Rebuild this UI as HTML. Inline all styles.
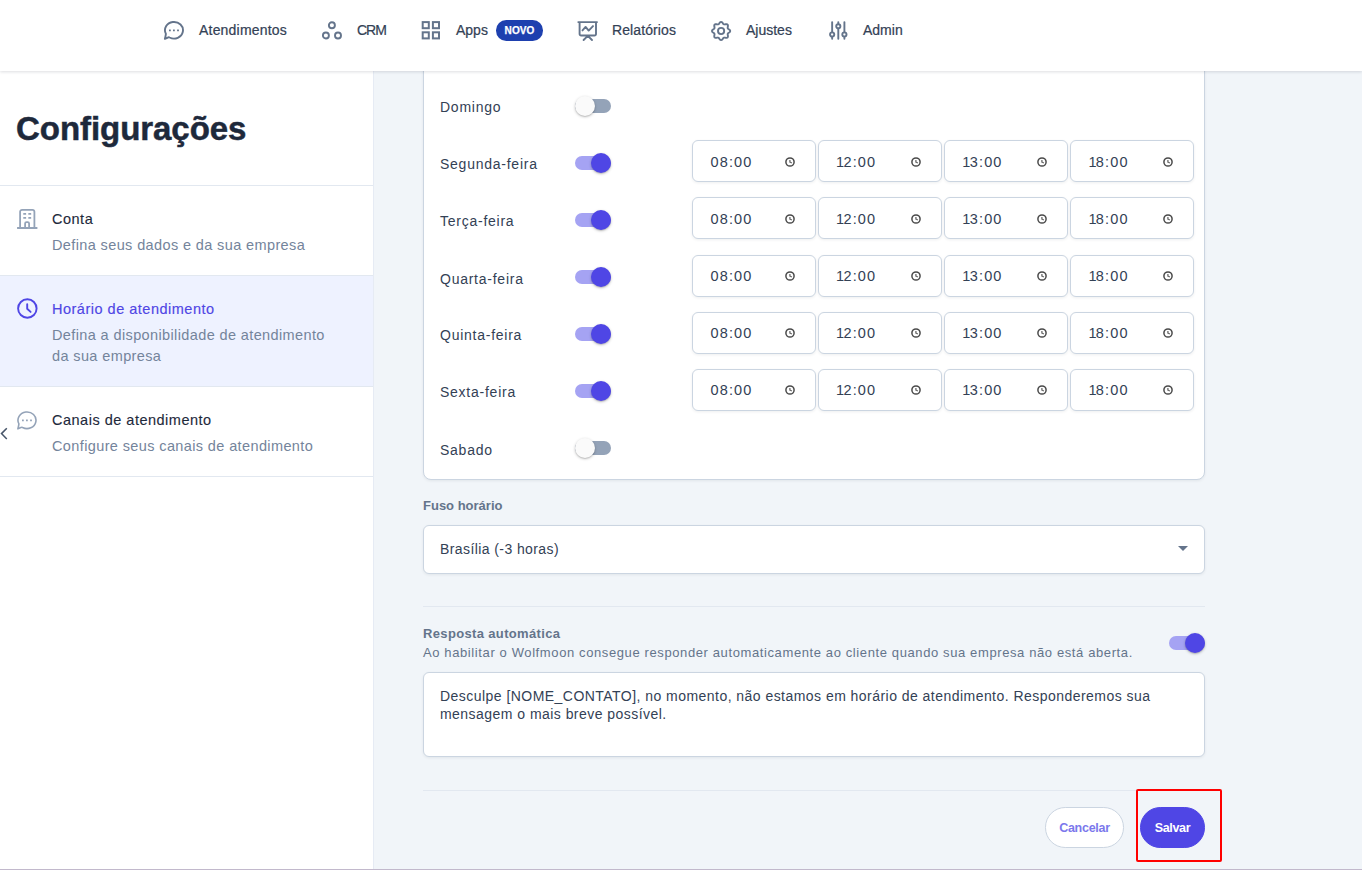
<!DOCTYPE html>
<html lang="pt-BR">
<head>
<meta charset="utf-8">
<title>Configurações - Horário de atendimento</title>
<style>
*{box-sizing:border-box;margin:0;padding:0}
html,body{width:1362px;height:870px;overflow:hidden}
body{font-family:"Liberation Sans",sans-serif;background:#f1f5f9;color:#1e293b;position:relative}
svg{display:block}
/* header */
.topbar{position:absolute;left:0;top:0;width:1362px;height:71px;background:#fff;box-shadow:0 1px 3px rgba(15,23,42,.14);z-index:5}
.nav{position:absolute;left:0;top:0;height:60px;list-style:none}
.nav li{position:absolute;top:0;height:60px;white-space:nowrap;font-size:14px;color:#334155;-webkit-text-stroke:.22px #334155}
.ic{position:absolute;left:0;display:block}
.nav li span.t{position:absolute;top:21.5px;line-height:16px}
.badge{position:absolute;top:20px;height:20.5px;border-radius:10.25px;background:#1e40af;color:#fff;font-size:10px;font-weight:700;line-height:21px;text-align:center;-webkit-text-stroke:.25px #fff;letter-spacing:.1px}
/* sidebar */
.side{position:absolute;left:0;top:71px;width:374px;height:799px;background:#fff;border-right:1px solid #e6ebf4}
.side h1{position:absolute;left:16px;top:38px;font-size:33px;line-height:40px;font-weight:700;color:#1e293b;letter-spacing:-.05px;-webkit-text-stroke:.5px #1e293b}
.menu{position:absolute;left:0;top:114px;width:373px;list-style:none;border-top:1px solid #e2e8f0}
.menu li{position:relative;border-bottom:1px solid #e2e8f0;padding:24px 20px 0 52px;white-space:nowrap}
.menu li.act{background:#eef2ff}

.menu li b{display:block;font-size:14.5px;line-height:18px;font-weight:400;color:#1e293b;letter-spacing:.5px;-webkit-text-stroke:.12px #1e293b}
.menu li.act b{color:#4f46e5;-webkit-text-stroke:.15px #4f46e5;letter-spacing:.5px}
.menu li p{font-size:14.5px;line-height:21.3px;color:#74849b;margin-top:6.5px;letter-spacing:.38px}
.chev{position:absolute;left:0;top:355.500px}
/* main */
.main{position:absolute;left:373px;top:71px;width:989px;height:799px}
.card{position:absolute;left:50px;top:-20px;width:782px;height:429px;background:#fff;border:1px solid #cbd5e1;border-radius:8px;box-shadow:0 1px 3px rgba(15,23,42,.07)}
.row{position:absolute;left:0;width:780px;height:42px}
.row label{position:absolute;left:16px;top:15.85px;font-size:14px;line-height:16px;color:#334155;white-space:nowrap;letter-spacing:.75px}
.tg{position:absolute;width:36px;height:20px}
.tg i{position:absolute;left:0;top:3px;width:36px;height:14px;border-radius:7px;background:#94a3b8}
.tg u{position:absolute;left:0;top:0;width:20px;height:20px;border-radius:50%;background:#fafafa;box-shadow:0 1px 3px rgba(0,0,0,.24),0 1px 1px rgba(0,0,0,.1)}
.tg.on i{background:#a5a3f3}
.tg.on u{left:16px;background:#4f46e5}
.row .tg{left:151px;top:12.8px}
.tm{position:absolute;top:0;width:124px;height:42px;border:1px solid #cbd5e1;border-radius:6px;background:#fff;box-shadow:0 1px 3px rgba(15,23,42,.07)}
.tm span i{font-style:normal;margin-left:-.5px;letter-spacing:-.6px}
.tm span{position:absolute;left:17.5px;top:12.8px;font-size:14.5px;line-height:16px;color:#334155;letter-spacing:1.15px}
.tm svg{position:absolute;left:91px;top:14.800px}
.row.up label,.row.up .tg,.row.up .tm span,.row.up .tm svg{margin-top:-.9px}
.lbl{position:absolute;left:50px;font-size:13px;line-height:14px;font-weight:700;color:#64748b;white-space:nowrap}
.sel{position:absolute;left:50px;top:454.4px;width:782px;height:48.2px;background:#fff;border:1px solid #cbd5e1;border-radius:6px;box-shadow:0 1px 3px rgba(15,23,42,.07)}
.sel span{position:absolute;left:16px;top:14.9px;font-size:14px;line-height:16px;color:#334155;letter-spacing:.41px;white-space:nowrap}
.sel em{position:absolute;right:16px;top:19.500px;width:0;height:0;border-left:5px solid transparent;border-right:5px solid transparent;border-top:5px solid #64748b}
.hr{position:absolute;left:50px;width:782px;height:1px;background:#e2e8f0}
.desc{position:absolute;left:50px;top:575px;font-size:13px;line-height:14px;color:#64748b;letter-spacing:.61px;white-space:nowrap}
.ta{position:absolute;left:50px;top:600.5px;width:782px;height:85px;background:#fff;border:1px solid #cbd5e1;border-radius:6px;box-shadow:0 1px 3px rgba(15,23,42,.07);padding:14.3px 16px;font-size:14px;line-height:18.5px;color:#334155;letter-spacing:.46px;white-space:nowrap}
.btn{position:absolute;top:736px;height:40.5px;border-radius:20.25px;font-size:12.5px;font-weight:700;line-height:40px;text-align:center}
.btn.c{left:672px;width:79px;background:#fff;border:1px solid #cbd5e1;color:#7b78ec;letter-spacing:-.26px}
.btn.s{left:767px;width:65px;background:#4f46e5;border:1px solid #4f46e5;color:#fff;letter-spacing:-.35px}
.hl{position:absolute;left:763px;top:717.7px;width:86.2px;height:73.3px;border:2.6px solid #ff0000;border-radius:2px}
.bl{position:absolute;left:0;top:868.5px;width:1362px;height:1.5px;background:linear-gradient(#d9d2e0,#ab9fb8);z-index:9}
</style>
</head>
<body>
<header class="topbar">
<ul class="nav">
<li style="left:163px"><span class="ic" style="top:19px"><svg width="22" height="22" viewBox="0 0 22 22" fill="none" stroke="#64748b" stroke-width="1.900" stroke-linejoin="round"><path d="M2.9 14.9A9 8.3 0 1 1 6.6 18.5Q5.6 17.9 4.9 18.6L1.900 19.800Q2.600 17.500 2.900 14.900z"/><g fill="#64748b" stroke="none"><rect x="6" y="10.400" width="1.800" height="1.800" rx=".3"/><rect x="10" y="10.400" width="1.800" height="1.800" rx=".3"/><rect x="14.100" y="10.400" width="1.800" height="1.800" rx=".3"/></g></svg></span><span class="t" style="left:36px;letter-spacing:.2px">Atendimentos</span></li>
<li style="left:321px"><span class="ic" style="top:20px"><svg width="22" height="20" viewBox="0 0 22 20" fill="none" stroke="#64748b" stroke-width="1.900"><circle cx="10.900" cy="5.200" r="3"/><circle cx="4.900" cy="15.500" r="3"/><circle cx="17" cy="15.500" r="3"/></svg></span><span class="t" style="left:36px;letter-spacing:-1px">CRM</span></li>
<li style="left:421px"><span class="ic" style="top:20px"><svg width="20" height="20" viewBox="0 0 20 20" fill="none" stroke="#64748b" stroke-width="2"><rect x="1.700" y="2.100" width="6.100" height="6.100"/><rect x="11.900" y="2.100" width="6.100" height="6.100"/><rect x="1.700" y="12.300" width="6.100" height="6.100"/><rect x="11.900" y="12.300" width="6.100" height="6.100"/></svg></span><span class="t" style="left:35px">Apps</span><span class="badge" style="left:75px;width:47px">NOVO</span></li>
<li style="left:577px"><span class="ic" style="top:20px"><svg width="22" height="22" viewBox="0 0 22 22" fill="none" stroke="#64748b" stroke-width="1.900" stroke-linecap="round" stroke-linejoin="round"><path d="M1.300 2.100H20M2.600 2.100V14a1.500 1.500 0 0 0 1.500 1.500H17.500a1.500 1.500 0 0 0 1.500-1.500V2.100M10.800 15.800L6.600 20M10.800 15.800L15 20M5.500 10.400L8.600 6.900l3.100 3.700L16 6.100"/></svg></span><span class="t" style="left:35px;letter-spacing:.1px">Relatórios</span></li>
<li style="left:710px"><span class="ic" style="top:19.800px"><svg width="22" height="22" viewBox="0 0 22 22" fill="none" stroke="#64748b" stroke-width="1.900" stroke-linejoin="round"><circle cx="11.100" cy="11" r="3.100"/><path transform="translate(.1 0)" d="M20.10 11.00 L19.95 11.59 L19.55 12.13 L18.99 12.59 L18.41 12.99 L17.94 13.36 L17.65 13.76 L17.57 14.24 L17.65 14.84 L17.78 15.53 L17.84 16.25 L17.75 16.92 L17.43 17.43 L16.92 17.75 L16.25 17.84 L15.53 17.78 L14.84 17.65 L14.24 17.57 L13.76 17.65 L13.36 17.94 L12.99 18.41 L12.59 18.99 L12.13 19.55 L11.59 19.95 L11.00 20.10 L10.41 19.95 L9.87 19.55 L9.41 18.99 L9.01 18.41 L8.64 17.94 L8.24 17.65 L7.76 17.57 L7.16 17.65 L6.47 17.78 L5.75 17.84 L5.08 17.75 L4.57 17.43 L4.25 16.92 L4.16 16.25 L4.22 15.53 L4.35 14.84 L4.43 14.24 L4.35 13.76 L4.06 13.36 L3.59 12.99 L3.01 12.59 L2.45 12.13 L2.05 11.59 L1.90 11.00 L2.05 10.41 L2.45 9.87 L3.01 9.41 L3.59 9.01 L4.06 8.64 L4.35 8.24 L4.43 7.76 L4.35 7.16 L4.22 6.47 L4.16 5.75 L4.25 5.08 L4.57 4.57 L5.08 4.25 L5.75 4.16 L6.47 4.22 L7.16 4.35 L7.76 4.43 L8.24 4.35 L8.64 4.06 L9.01 3.59 L9.41 3.01 L9.87 2.45 L10.41 2.05 L11.00 1.90 L11.59 2.05 L12.13 2.45 L12.59 3.01 L12.99 3.59 L13.36 4.06 L13.76 4.35 L14.24 4.43 L14.84 4.35 L15.53 4.22 L16.25 4.16 L16.92 4.25 L17.43 4.57 L17.75 5.08 L17.84 5.75 L17.78 6.47 L17.65 7.16 L17.57 7.76 L17.65 8.24 L17.94 8.64 L18.41 9.01 L18.99 9.41 L19.55 9.87 L19.95 10.41z"/></svg></span><span class="t" style="left:36px">Ajustes</span></li>
<li style="left:829px"><span class="ic" style="top:20px"><svg width="20" height="20" viewBox="0 0 20 20" fill="none" stroke="#64748b" stroke-width="1.900" stroke-linecap="round"><path d="M3.150 2.100V12.300M3.150 16.700V18.700M9.300 2.100V4.100M9.300 8.500V18.700M15.400 2.100V12.300M15.400 16.700V18.700"/><circle cx="3.150" cy="14.500" r="2.100"/><circle cx="9.300" cy="6.300" r="2.100"/><circle cx="15.400" cy="14.500" r="2.100"/></svg></span><span class="t" style="left:34px">Admin</span></li>
</ul>
</header>

<aside class="side">
<h1>Configurações</h1>
<ul class="menu">
<li style="height:90px"><span class="ic" style="left:16px;top:22px"><svg width="24" height="22" viewBox="0 0 24 22" fill="none" stroke="#94a3b8" stroke-width="1.800"><path d="M1.100 20H21.400M4.100 20V3.800a2 2 0 0 1 2-2H16.400a2 2 0 0 1 2 2V20M9.100 20V15.600a1.500 1.500 0 0 1 1.500-1.500h1a1.500 1.500 0 0 1 1.500 1.500V20"/><g fill="#94a3b8" stroke="none"><rect x="7.250" y="4.950" width="2.900" height="1.900" rx=".3"/><rect x="12.300" y="4.950" width="2.900" height="1.900" rx=".3"/><rect x="7.250" y="8.950" width="2.900" height="1.900" rx=".3"/><rect x="12.300" y="8.950" width="2.900" height="1.900" rx=".3"/></g></svg></span><b>Conta</b><p>Defina seus dados e da sua empresa</p></li>
<li class="act" style="height:111px"><span class="ic" style="left:16px;top:21px"><svg width="24" height="24" viewBox="0 0 24 24" fill="none" stroke="#4f46e5" stroke-width="1.900" stroke-linecap="round" stroke-linejoin="round"><circle cx="11.350" cy="11.500" r="9.250"/><path d="M11.200 7.300V11.800L14.600 14.900"/></svg></span><b>Horário de atendimento</b><p>Defina a disponibilidade de atendimento<br>da sua empresa</p></li>
<li style="height:90px"><span class="ic" style="left:16.100px;top:21.500px"><svg width="22" height="22" viewBox="0 0 22 22" fill="none" stroke="#94a3b8" stroke-width="1.600" stroke-linejoin="round"><path d="M2.9 14.9A9 8.3 0 1 1 6.6 18.5Q5.6 17.9 4.9 18.6L1.900 19.800Q2.600 17.500 2.900 14.900z"/><g fill="#94a3b8" stroke="none"><rect x="6" y="10.400" width="1.800" height="1.800" rx=".3"/><rect x="10" y="10.400" width="1.800" height="1.800" rx=".3"/><rect x="14.100" y="10.400" width="1.800" height="1.800" rx=".3"/></g></svg></span><b>Canais de atendimento</b><p>Configure seus canais de atendimento</p></li>
</ul>
<svg class="chev" width="9" height="13" viewBox="0 0 9 13" fill="none" stroke="#475569" stroke-width="1.500"><path d="M6.800 1.200L1.500 6.600l5.300 5.400"/></svg>
</aside>

<main class="main">
<section class="card">
<div class="row" style="top:31.5px"><label>Domingo</label><div class="tg"><i></i><u></u></div></div>
<div class="row" style="top:88.1px"><label>Segunda-feira</label><div class="tg on"><i></i><u></u></div>
<div class="tm" style="left:268px"><span>08:00</span><svg width="12" height="12" viewBox="0 0 12 12" fill="none" stroke="#4a4a4a" stroke-width="1.500"><circle cx="6" cy="6" r="4.100"/><path d="M5.900 3.900V6L7.900 7" stroke="#6b6b6b" stroke-width="1.300"/></svg></div>
<div class="tm" style="left:394px"><span><i>1</i>2:00</span><svg width="12" height="12" viewBox="0 0 12 12" fill="none" stroke="#4a4a4a" stroke-width="1.500"><circle cx="6" cy="6" r="4.100"/><path d="M5.900 3.900V6L7.900 7" stroke="#6b6b6b" stroke-width="1.300"/></svg></div>
<div class="tm" style="left:520.3px"><span><i>1</i>3:00</span><svg width="12" height="12" viewBox="0 0 12 12" fill="none" stroke="#4a4a4a" stroke-width="1.500"><circle cx="6" cy="6" r="4.100"/><path d="M5.900 3.900V6L7.900 7" stroke="#6b6b6b" stroke-width="1.300"/></svg></div>
<div class="tm" style="left:646.4px"><span><i>1</i>8:00</span><svg width="12" height="12" viewBox="0 0 12 12" fill="none" stroke="#4a4a4a" stroke-width="1.500"><circle cx="6" cy="6" r="4.100"/><path d="M5.900 3.900V6L7.900 7" stroke="#6b6b6b" stroke-width="1.300"/></svg></div>
</div>
<div class="row" style="top:145.4px"><label>Terça-feira</label><div class="tg on"><i></i><u></u></div>
<div class="tm" style="left:268px"><span>08:00</span><svg width="12" height="12" viewBox="0 0 12 12" fill="none" stroke="#4a4a4a" stroke-width="1.500"><circle cx="6" cy="6" r="4.100"/><path d="M5.900 3.900V6L7.900 7" stroke="#6b6b6b" stroke-width="1.300"/></svg></div>
<div class="tm" style="left:394px"><span><i>1</i>2:00</span><svg width="12" height="12" viewBox="0 0 12 12" fill="none" stroke="#4a4a4a" stroke-width="1.500"><circle cx="6" cy="6" r="4.100"/><path d="M5.900 3.900V6L7.900 7" stroke="#6b6b6b" stroke-width="1.300"/></svg></div>
<div class="tm" style="left:520.3px"><span><i>1</i>3:00</span><svg width="12" height="12" viewBox="0 0 12 12" fill="none" stroke="#4a4a4a" stroke-width="1.500"><circle cx="6" cy="6" r="4.100"/><path d="M5.900 3.900V6L7.900 7" stroke="#6b6b6b" stroke-width="1.300"/></svg></div>
<div class="tm" style="left:646.4px"><span><i>1</i>8:00</span><svg width="12" height="12" viewBox="0 0 12 12" fill="none" stroke="#4a4a4a" stroke-width="1.500"><circle cx="6" cy="6" r="4.100"/><path d="M5.900 3.900V6L7.900 7" stroke="#6b6b6b" stroke-width="1.300"/></svg></div>
</div>
<div class="row" style="top:202.7px"><label>Quarta-feira</label><div class="tg on"><i></i><u></u></div>
<div class="tm" style="left:268px"><span>08:00</span><svg width="12" height="12" viewBox="0 0 12 12" fill="none" stroke="#4a4a4a" stroke-width="1.500"><circle cx="6" cy="6" r="4.100"/><path d="M5.900 3.900V6L7.900 7" stroke="#6b6b6b" stroke-width="1.300"/></svg></div>
<div class="tm" style="left:394px"><span><i>1</i>2:00</span><svg width="12" height="12" viewBox="0 0 12 12" fill="none" stroke="#4a4a4a" stroke-width="1.500"><circle cx="6" cy="6" r="4.100"/><path d="M5.900 3.900V6L7.900 7" stroke="#6b6b6b" stroke-width="1.300"/></svg></div>
<div class="tm" style="left:520.3px"><span><i>1</i>3:00</span><svg width="12" height="12" viewBox="0 0 12 12" fill="none" stroke="#4a4a4a" stroke-width="1.500"><circle cx="6" cy="6" r="4.100"/><path d="M5.900 3.900V6L7.900 7" stroke="#6b6b6b" stroke-width="1.300"/></svg></div>
<div class="tm" style="left:646.4px"><span><i>1</i>8:00</span><svg width="12" height="12" viewBox="0 0 12 12" fill="none" stroke="#4a4a4a" stroke-width="1.500"><circle cx="6" cy="6" r="4.100"/><path d="M5.900 3.900V6L7.900 7" stroke="#6b6b6b" stroke-width="1.300"/></svg></div>
</div>
<div class="row up" style="top:259.9px"><label>Quinta-feira</label><div class="tg on"><i></i><u></u></div>
<div class="tm" style="left:268px"><span>08:00</span><svg width="12" height="12" viewBox="0 0 12 12" fill="none" stroke="#4a4a4a" stroke-width="1.500"><circle cx="6" cy="6" r="4.100"/><path d="M5.900 3.900V6L7.900 7" stroke="#6b6b6b" stroke-width="1.300"/></svg></div>
<div class="tm" style="left:394px"><span><i>1</i>2:00</span><svg width="12" height="12" viewBox="0 0 12 12" fill="none" stroke="#4a4a4a" stroke-width="1.500"><circle cx="6" cy="6" r="4.100"/><path d="M5.900 3.900V6L7.900 7" stroke="#6b6b6b" stroke-width="1.300"/></svg></div>
<div class="tm" style="left:520.3px"><span><i>1</i>3:00</span><svg width="12" height="12" viewBox="0 0 12 12" fill="none" stroke="#4a4a4a" stroke-width="1.500"><circle cx="6" cy="6" r="4.100"/><path d="M5.900 3.900V6L7.900 7" stroke="#6b6b6b" stroke-width="1.300"/></svg></div>
<div class="tm" style="left:646.4px"><span><i>1</i>8:00</span><svg width="12" height="12" viewBox="0 0 12 12" fill="none" stroke="#4a4a4a" stroke-width="1.500"><circle cx="6" cy="6" r="4.100"/><path d="M5.900 3.900V6L7.900 7" stroke="#6b6b6b" stroke-width="1.300"/></svg></div>
</div>
<div class="row up" style="top:317.2px"><label>Sexta-feira</label><div class="tg on"><i></i><u></u></div>
<div class="tm" style="left:268px"><span>08:00</span><svg width="12" height="12" viewBox="0 0 12 12" fill="none" stroke="#4a4a4a" stroke-width="1.500"><circle cx="6" cy="6" r="4.100"/><path d="M5.900 3.900V6L7.900 7" stroke="#6b6b6b" stroke-width="1.300"/></svg></div>
<div class="tm" style="left:394px"><span><i>1</i>2:00</span><svg width="12" height="12" viewBox="0 0 12 12" fill="none" stroke="#4a4a4a" stroke-width="1.500"><circle cx="6" cy="6" r="4.100"/><path d="M5.900 3.900V6L7.900 7" stroke="#6b6b6b" stroke-width="1.300"/></svg></div>
<div class="tm" style="left:520.3px"><span><i>1</i>3:00</span><svg width="12" height="12" viewBox="0 0 12 12" fill="none" stroke="#4a4a4a" stroke-width="1.500"><circle cx="6" cy="6" r="4.100"/><path d="M5.900 3.900V6L7.900 7" stroke="#6b6b6b" stroke-width="1.300"/></svg></div>
<div class="tm" style="left:646.4px"><span><i>1</i>8:00</span><svg width="12" height="12" viewBox="0 0 12 12" fill="none" stroke="#4a4a4a" stroke-width="1.500"><circle cx="6" cy="6" r="4.100"/><path d="M5.900 3.900V6L7.900 7" stroke="#6b6b6b" stroke-width="1.300"/></svg></div>
</div>
<div class="row" style="top:373.7px"><label>Sabado</label><div class="tg"><i></i><u></u></div></div>
</section>
<div class="lbl" style="top:428px">Fuso horário</div>
<div class="sel"><span>Brasília (-3 horas)</span><em></em></div>
<div class="hr" style="top:535px"></div>
<div class="lbl" style="top:556px;letter-spacing:.35px">Resposta automática</div>
<div class="desc">Ao habilitar o Wolfmoon consegue responder automaticamente ao cliente quando sua empresa não está aberta.</div>
<div class="tg on" style="left:796px;top:562px"><i></i><u></u></div>
<div class="ta">Desculpe [NOME_CONTATO], no momento, não estamos em horário de atendimento. Responderemos sua<br>mensagem o mais breve possível.</div>
<div class="hr" style="top:719px"></div>
<div class="btn c">Cancelar</div>
<div class="btn s">Salvar</div>
<div class="hl"></div>
</main>
<div class="bl"></div>
</body>
</html>
